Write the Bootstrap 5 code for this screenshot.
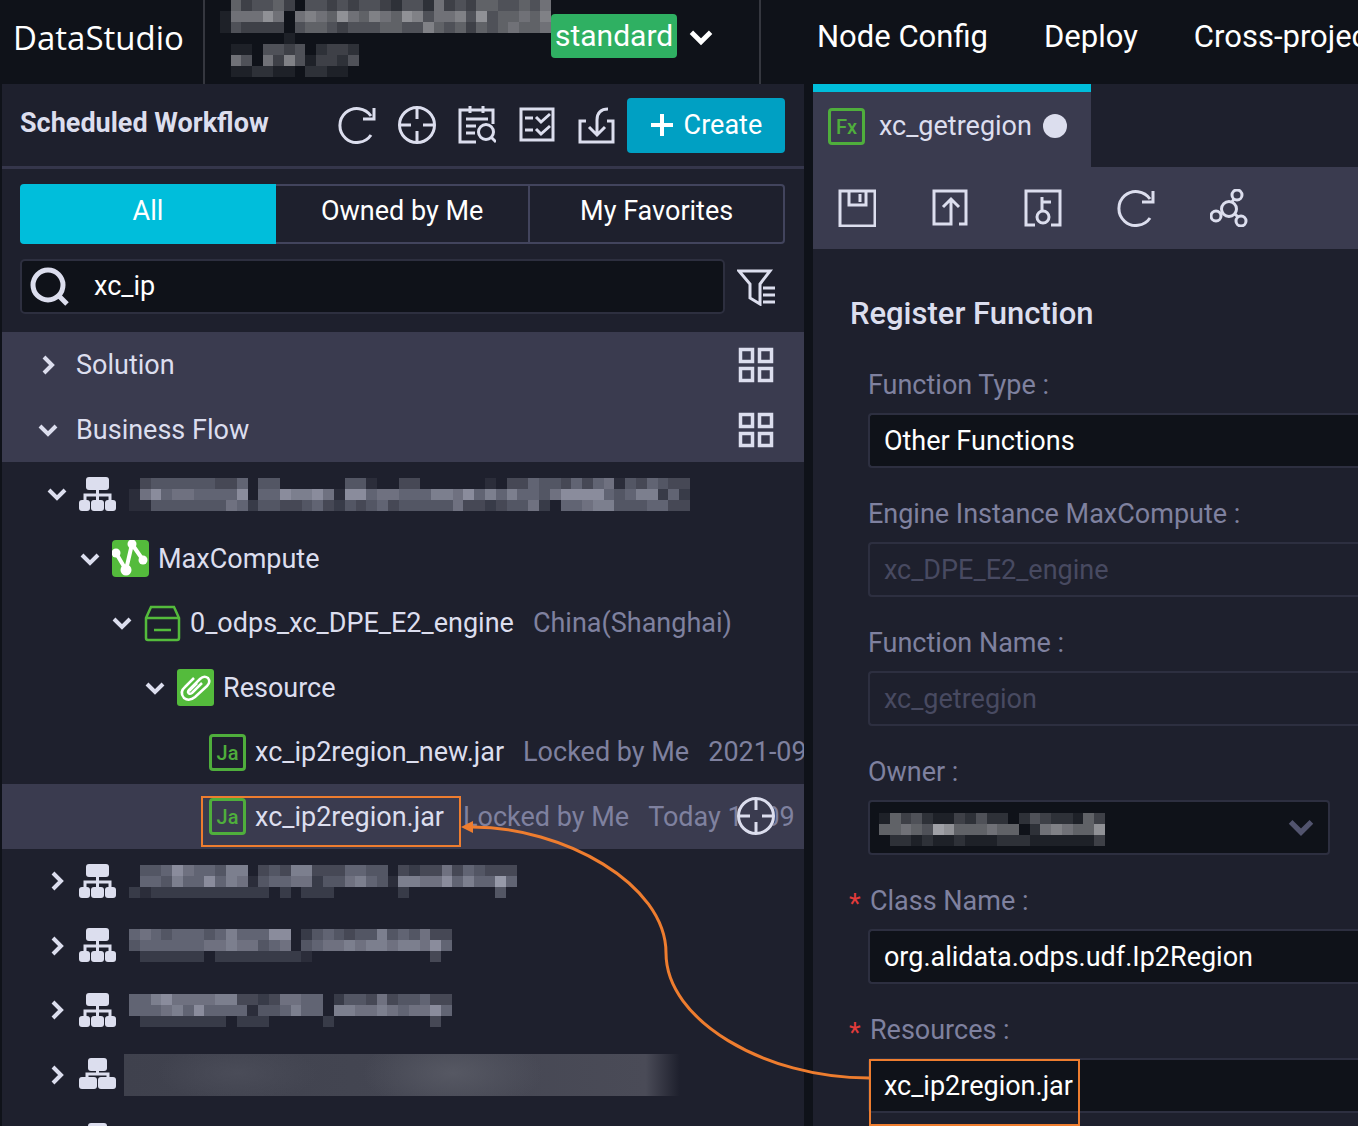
<!DOCTYPE html>
<html lang="en">
<head>
<meta charset="utf-8">
<meta name="viewport" content="width=device-width, initial-scale=1">
<title>DataStudio</title>
<link href="https://cdn.jsdelivr.net/npm/bootstrap@5.3.0/dist/css/bootstrap.min.css" rel="stylesheet">
<style>
:root{--ink:#0f1219;--panel:#1e202d;--raise:#3a3b4f;--line:#35364b;--text:#dcdeee;--dim:#7f819f;--faint:#484a61;--cyan:#00bedb;--green:#54bb3c}
body{font-family:Roboto,"Liberation Sans",sans-serif;font-size:27px;line-height:36px;background:var(--ink);color:var(--text);height:100vh;overflow:hidden}
svg{display:block;flex:none}
a{color:inherit;text-decoration:none}
.ico{width:38px;height:38px;fill:none;stroke:var(--text);stroke-width:3}
.plainbtn{background:none;border:0;padding:0;color:inherit}
.chev{width:20px;height:20px;fill:none;stroke:var(--text);stroke-width:4}
.topbar{height:84px;color:#fff}
.brand{font-family:"Open Sans","Noto Sans",sans-serif;font-size:33px;width:205px;padding:0 0 8px 13px;border-right:2px solid #35373f}
.project{width:556px;border-right:2px solid #35373f;padding-left:15px}
.project .envtag{background:#2fb062;border-radius:4px;height:44px;font-size:30px;line-height:44px;padding:0 4px;margin-bottom:12px}
.project .chev{width:24px;height:24px;stroke:#fff;margin-bottom:11px}
.menu{gap:56px;padding:0 0 11px 56px;font-size:31px}
.sidebar{width:59.2%;padding-left:2px}
.sidebar>*{background:var(--panel)}
.sidehead{height:85px;border-bottom:3px solid var(--line);padding:0 19px 0 18px}
.sidehead h2{font-size:27px;line-height:36px;font-weight:700;padding-bottom:4px}
.tools{gap:22px}
.create{background:#00a0c3;color:#fff;border:0;border-radius:4px;width:158px;height:55px;font-size:27px;line-height:36px;margin-left:11px;gap:10px}
.filters{padding:15px 19px 18px 18px}
.owntabs{height:60px;border-radius:4px;margin-bottom:15px}
.owntabs button{border:2px solid #42445d;background:none;color:#fff;padding-bottom:7px}
.owntabs button:first-child{background:var(--cyan);border-color:var(--cyan);border-radius:4px 0 0 4px}
.owntabs button:nth-child(2){border-left:0}
.owntabs button:last-child{border-left:0;border-radius:0 4px 4px 0}
.searchbox{height:55px;border:2px solid #2d2f3f;background:var(--ink);border-radius:5px;padding-left:8px}
.searchbox input{background:none;border:0;outline:0;color:#fff;padding:0 0 2px}
.filterbtn{margin:0 10px 0 12px}
.sect{height:65px;background:var(--raise);padding:0 29px 0 36px;gap:18px}
.tree{margin:0;padding:0;list-style:none}
.tree li{height:64px;gap:12px;white-space:nowrap;position:relative;overflow:hidden}
.tree li:nth-child(even){height:65px}
.lv1{padding-left:45px}.lv2{padding-left:78px}.lv3{padding-left:110px}.lv4{padding-left:143px}.lv5{padding-left:207px}
.tree .node{gap:9px}
.tree .note{color:var(--dim);margin-left:10px}
.tree .mosaic{margin-left:4px}
.tree .picked{background:var(--raise)}
.locate{position:absolute;right:29px;top:13px;background:var(--raise);border-radius:50%}
.nodeico{width:37px;height:37px}
.typebox{width:37px;height:37px;border:3px solid #4fae3c;border-radius:4px;color:#4fae3c;font-size:20px;line-height:32px;font-weight:500;text-align:center;flex:none}
.smudge{width:567px;height:42px;margin-left:-1px;background:radial-gradient(ellipse 80px 30px at 20% 45%,#4a4c58,transparent),radial-gradient(ellipse 90px 40px at 58% 45%,#565863,transparent),linear-gradient(90deg,#3f414d,#444652 50%,#4a4b57 92%,#1e202d 98%)}
.editor{margin-left:9px;background:var(--panel)}
.tabstrip{height:83px}
.filetab{background:var(--raise);border-top:8px solid var(--cyan);width:278px;padding:0 0 7px 15px;gap:14px}
.unsaved{width:24px;height:24px;border-radius:50%;background:var(--text);margin-left:-3px}
.toolrow{height:82px;background:var(--raise);gap:55px;padding-left:25px}
.regform{padding:47px 0 0 37px}
.regform h1{font-size:31px;line-height:36px;font-weight:500;margin:0 0 35px}
.fieldset-row{padding-left:18px;height:129px}
.fieldset-row label{display:block;color:var(--dim);height:36px;line-height:36px;margin-bottom:10px;position:relative}
.need label{padding-left:2px}
.need label::before{content:"*";color:#e23b3b;position:absolute;left:-19px;top:3px}
.field{display:block;width:100%;height:55px;background:var(--ink);color:#fff;border:2px solid #2d2f40;border-right:0;border-radius:4px 0 0 4px;padding:0 14px;appearance:none;opacity:1}
.field:disabled{background:none;color:var(--faint)}
.owner{margin-right:28px;position:relative}
.owner .field{border-right:2px solid #2d2f40;border-radius:4px}
.owner .chev{position:absolute;right:16px;top:14px;width:26px;height:26px;stroke:#52546e}
.owner .mosaic{position:absolute;left:11px;top:13px}
.callout-layer{position:absolute;left:0;top:0;pointer-events:none}
</style>
<script src="https://cdn.jsdelivr.net/npm/bootstrap@5.3.0/dist/js/bootstrap.bundle.min.js"></script>
</head>
<body class="d-flex flex-column">
<svg width="0" height="0" class="position-absolute">
  <symbol id="down" viewBox="0 0 20 20"><path d="M2 6l8 8 8-8"/></symbol>
  <symbol id="right" viewBox="0 0 20 20"><path d="M6 2l8 8-8 8"/></symbol>
  <symbol id="reload" viewBox="0 0 38 38"><path d="M33 29A17 17 0 1 1 33 10M36 2v11H25"/></symbol>
  <symbol id="aim" viewBox="0 0 38 38"><circle cx="19" cy="19" r="17.500"/><path d="M19 2v11M19 25v11M2 19h11M25 19h11"/></symbol>
  <symbol id="grid4" viewBox="0 0 38 38"><path stroke-width="3.500" d="M3.500 3.500h12v12h-12zM22.500 3.500h12v12h-12zM3.500 22.500h12v12h-12zM22.500 22.500h12v12h-12z"/></symbol>
  <symbol id="org" viewBox="0 0 37 37"><g fill="#dcdeee"><rect x="7" y="1" width="23" height="13" rx="3"/><rect x="0" y="24" width="11" height="11" rx="3"/><rect x="12" y="24" width="13" height="11" rx="3"/><rect x="26" y="24" width="11" height="11" rx="3"/></g><path d="M18.500 13v13M6 26v-7h25v7" fill="none" stroke="#dcdeee" stroke-width="3"/></symbol>
  <symbol id="org2" viewBox="0 0 37 37"><g fill="#dcdeee"><rect x="9" y="2" width="19" height="13" rx="3"/><rect x="0" y="21" width="18" height="12" rx="3"/><rect x="19" y="21" width="18" height="12" rx="3"/></g><path d="M18.500 14v4M8 22v-4h21v4" fill="none" stroke="#dcdeee" stroke-width="3"/></symbol>
</svg>

<header class="topbar d-flex flex-shrink-0 overflow-hidden">
  <div class="brand d-flex align-items-center flex-shrink-0">DataStudio</div>
  <div class="project d-flex align-items-center flex-shrink-0">
    <svg class="mosaic align-self-start" data-gray="1" data-w="331" data-rows="0534453044343443244263435544546|1666860676586576587466748455657|1433330455434445544754535456556|0000001000000000000000000000000|0110443402332000000000000000000|0640637413324000000000000000000|0112211022110000000000000000000"></svg>
    <span class="envtag">standard</span>
    <button class="plainbtn ms-2 ps-1" aria-label="Switch project"><svg class="chev" viewBox="0 0 20 20"><use href="#down"/></svg></button>
  </div>
  <nav class="menu d-flex align-items-center text-nowrap"><a href="#">Node Config</a><a href="#">Deploy</a><a href="#">Cross-project</a></nav>
</header>

<main class="d-flex flex-grow-1 overflow-hidden">
  <aside class="sidebar d-flex flex-column flex-shrink-0 overflow-hidden">
    <div class="sidehead d-flex align-items-center flex-shrink-0">
      <h2 class="m-0 text-nowrap">Scheduled Workflow</h2>
      <div class="tools d-flex ms-auto">
        <button class="plainbtn" aria-label="Refresh"><svg class="ico"><use href="#reload"/></svg></button>
        <button class="plainbtn" aria-label="Locate"><svg class="ico"><use href="#aim"/></svg></button>
        <button class="plainbtn" aria-label="Search code"><svg class="ico" viewBox="0 0 38 38"><path d="M18 36H2V4h33v14M12 0v7M25 0v7M8 13h22M8 20h10M8 27h9"/><circle cx="28" cy="26" r="7.500"/><path d="M33 31l5 5"/></svg></button>
        <button class="plainbtn" aria-label="Batch operation"><svg class="ico" viewBox="0 0 38 38"><path d="M3 3h32v31H3zM7 12h8M7 24h8M18 11l5 5 9-8M18 23l5 5 9-8"/></svg></button>
        <button class="plainbtn" aria-label="Import"><svg class="ico" viewBox="0 0 38 38"><path d="M8 15H2v21h33V15h-6M30 3c-7 0-11 4-11 11v15M11 21l8 8 8-8"/></svg></button>
      </div>
      <button class="create btn d-flex align-items-center justify-content-center p-0"><svg width="24" height="24" viewBox="0 0 24 24" stroke="#fff" stroke-width="4"><path d="M12 1v22M1 12h22"/></svg>Create</button>
    </div>
    <div class="filters flex-shrink-0">
      <div class="owntabs d-flex"><button class="flex-fill w-100">All</button><button class="flex-fill w-100">Owned by Me</button><button class="flex-fill w-100">My Favorites</button></div>
      <div class="d-flex align-items-center">
        <div class="searchbox d-flex align-items-center flex-grow-1">
          <svg width="40" height="40" viewBox="0 0 40 40" fill="none" stroke="#dcdeee" stroke-width="5"><circle cx="18" cy="18" r="15"/><path d="M28 28l9 9"/></svg>
          <input class="flex-grow-1 ms-4" aria-label="Search nodes" value="xc_ip">
        </div>
        <button class="plainbtn filterbtn" aria-label="Filter"><svg class="ico" viewBox="0 0 38 38"><path d="M2 3h31L23 16v20l-10-6V16zM26 20h12M26 27h12M26 34h12"/></svg></button>
      </div>
    </div>
    <div class="sect d-flex align-items-center flex-shrink-0"><svg class="chev"><use href="#right"/></svg>Solution<button class="plainbtn ms-auto" aria-label="Solution view"><svg class="ico"><use href="#grid4"/></svg></button></div>
    <div class="sect d-flex align-items-center flex-shrink-0"><svg class="chev"><use href="#down"/></svg>Business Flow<button class="plainbtn ms-auto" aria-label="Business flow view"><svg class="ico"><use href="#grid4"/></svg></button></div>
    <ul class="tree flex-grow-1 overflow-hidden">
      <li class="lv1 d-flex align-items-center"><svg class="chev"><use href="#down"/></svg><div class="node d-flex align-items-center"><svg class="nodeico"><use href="#org"/></svg><svg class="mosaic" data-w="561" data-rows="0344444433504400000044100330000001033544353561435433|1685665555805587786188566555776857575546888854577252|1144444446524433453243453444446332344620556774445533"></svg></div></li>
      <li class="lv2 d-flex align-items-center"><svg class="chev"><use href="#down"/></svg><div class="node d-flex align-items-center"><svg class="nodeico" viewBox="0 0 37 37"><rect width="37" height="37" rx="4" fill="#54bb3c"/><path d="M4 13l10 17 6-26 11 16" fill="none" stroke="#fff" stroke-width="4"/><g fill="#fff"><circle cx="4" cy="13" r="4.500"/><circle cx="14" cy="30" r="5.500"/><circle cx="20" cy="4" r="4.500"/><circle cx="31" cy="20" r="4.500"/></g></svg>MaxCompute</div></li>
      <li class="lv3 d-flex align-items-center"><svg class="chev"><use href="#down"/></svg><div class="node d-flex align-items-center"><svg class="nodeico" viewBox="0 0 37 37" fill="none" stroke="#54bb3c" stroke-width="2.500"><path d="M2 13L7 2h23l5 11v20q0 2-2 2H4q-2 0-2-2zM2 13h33M10 25h17"/></svg>0_odps_xc_DPE_E2_engine<span class="note">China(Shanghai)</span></div></li>
      <li class="lv4 d-flex align-items-center"><svg class="chev"><use href="#down"/></svg><div class="node d-flex align-items-center"><svg class="nodeico" viewBox="0 0 37 37"><rect width="37" height="37" rx="3" fill="#54bb3c"/><path d="M25 14L15 24q-3 2-4-1 0-1 1-2L23 10q4-4 8-1 3 4-1 8L18 28q-6 5-11 1-5-6 1-11l9-9M20 14l-8 8" fill="none" stroke="#fff" stroke-width="2.500"/></svg>Resource</div></li>
      <li class="lv5 d-flex align-items-center"><div class="node d-flex align-items-center"><span class="typebox">Ja</span>xc_ip2region_new.jar<span class="note">Locked by Me</span><span class="note">2021-09</span></div></li>
      <li class="lv5 picked d-flex align-items-center"><div class="node d-flex align-items-center"><span class="typebox">Ja</span>xc_ip2region.jar<span class="note">Locked by Me</span><span class="note">Today 10:09</span></div><button class="plainbtn locate" aria-label="Locate node"><svg class="ico"><use href="#aim"/></svg></button></li>
      <li class="lv1 d-flex align-items-center"><svg class="chev"><use href="#right"/></svg><div class="node d-flex align-items-center"><svg class="nodeico"><use href="#org"/></svg><svg class="mosaic" data-w="388" data-rows="044586554770343773335544032336354333|055475585761455662446754177668575595|212222222222202022200000020000000040"></svg></div></li>
      <li class="lv1 d-flex align-items-center"><svg class="chev"><use href="#right"/></svg><div class="node d-flex align-items-center"><svg class="nodeico"><use href="#org"/></svg><svg class="mosaic" data-w="323" data-rows="565455545755588024543447454633|455555566766456045667677677685|022222202222222210000000000030"></svg></div></li>
      <li class="lv1 d-flex align-items-center"><svg class="chev"><use href="#right"/></svg><div class="node d-flex align-items-center"><svg class="nodeico"><use href="#org"/></svg><svg class="mosaic" data-w="323" data-rows="557866667733236655024436344533|555675855551445755077667656685|022222222022200000200000000030"></svg></div></li>
      <li class="lv1 d-flex align-items-center"><svg class="chev"><use href="#right"/></svg><div class="node d-flex align-items-center"><svg class="nodeico"><use href="#org2"/></svg><div class="smudge"></div></div></li>
      <li class="lv1 d-flex align-items-center"><svg class="chev"><use href="#right"/></svg><div class="node d-flex align-items-center"><svg class="nodeico"><use href="#org2"/></svg></div></li>
    </ul>
  </aside>

  <section class="editor flex-grow-1 overflow-hidden">
    <div class="tabstrip d-flex"><div class="filetab d-flex align-items-center"><span class="typebox">Fx</span>xc_getregion<span class="unsaved"></span></div></div>
    <div class="toolrow d-flex align-items-center">
      <button class="plainbtn" aria-label="Save"><svg class="ico" viewBox="0 0 38 38"><path d="M2 2h35v35H2zM11 2v14h17V2M22 5v8"/></svg></button>
      <button class="plainbtn" aria-label="Submit"><svg class="ico" viewBox="0 0 38 38"><path d="M28 35h7V2H3v33h17V11M12 18l8-8 8 8"/></svg></button>
      <button class="plainbtn" aria-label="Unlock"><svg class="ico" viewBox="0 0 38 38"><path d="M11 36H2V2h34v34h-9M18 22V8M18 13h9"/><circle cx="19" cy="28" r="6"/></svg></button>
      <button class="plainbtn" aria-label="Reload"><svg class="ico"><use href="#reload"/></svg></button>
      <button class="plainbtn" aria-label="Lineage"><svg class="ico" viewBox="0 0 38 38"><circle cx="19" cy="20" r="7.500"/><circle cx="27" cy="6" r="5"/><circle cx="6" cy="27" r="5"/><circle cx="31" cy="32" r="5"/><path d="M22 13l2-3M12 24l-2 1M25 25l3 3"/></svg></button>
    </div>
    <form class="regform">
      <h1>Register Function</h1>
      <div class="fieldset-row"><label for="ftype">Function Type :</label><select id="ftype" class="field"><option>Other Functions</option></select></div>
      <div class="fieldset-row"><label for="engine">Engine Instance MaxCompute :</label><input id="engine" class="field" value="xc_DPE_E2_engine" disabled></div>
      <div class="fieldset-row"><label for="fname">Function Name :</label><input id="fname" class="field" value="xc_getregion" disabled></div>
      <div class="fieldset-row"><label for="owner">Owner :</label><div class="owner"><select id="owner" class="field"><option></option></select><svg class="mosaic" data-gray="1" data-w="226" data-rows="153421132422024322153|556549855565502676558|022121121112221111113"></svg><svg class="chev" viewBox="0 0 20 20"><use href="#down"/></svg></div></div>
      <div class="fieldset-row need"><label for="cls">Class Name :</label><input id="cls" class="field" value="org.alidata.odps.udf.Ip2Region"></div>
      <div class="fieldset-row need"><label for="res">Resources :</label><input id="res" class="field" value="xc_ip2region.jar"></div>
    </form>
  </section>
</main>

<svg class="callout-layer" width="1358" height="1126" fill="none" stroke="#ee7d2f" stroke-width="2">
  <rect x="202" y="797" width="258" height="49"/><rect x="870" y="1060" width="209" height="65"/>
  <path d="M869 1078C764 1078 666 1020 666 953C666 884 563 827 472 827" stroke-width="3"/><path d="M461 827l12-6v12z" fill="#ee7d2f" stroke="none"/>
</svg>
<script>
// Masked names: each digit is one square's brightness, rows are split by "|".
document.querySelectorAll('.mosaic').forEach(function (svg) {
  var rows = svg.dataset.rows.split('|'), n = rows[0].length, h = 11 * rows.length, w = svg.dataset.w;
  svg.setAttribute('width', w); svg.setAttribute('height', h);
  svg.setAttribute('viewBox', '0 0 ' + n * 11 + ' ' + h);
  svg.setAttribute('preserveAspectRatio', 'none');
  svg.setAttribute('shape-rendering', 'crispEdges');
  svg.setAttribute('fill', svg.dataset.gray ? '#e6e6ea' : '#d2d5e6');
  rows.forEach(function (r, y) {
    r.split('').forEach(function (d, x) {
      if (d === '0') return;
      var c = document.createElementNS('http://www.w3.org/2000/svg', 'rect');
      c.setAttribute('x', x * 11); c.setAttribute('y', y * 11);
      c.setAttribute('width', 11); c.setAttribute('height', 11);
      c.setAttribute('fill-opacity', d * 0.075);
      svg.appendChild(c);
    });
  });
});
</script>
</body>
</html>
